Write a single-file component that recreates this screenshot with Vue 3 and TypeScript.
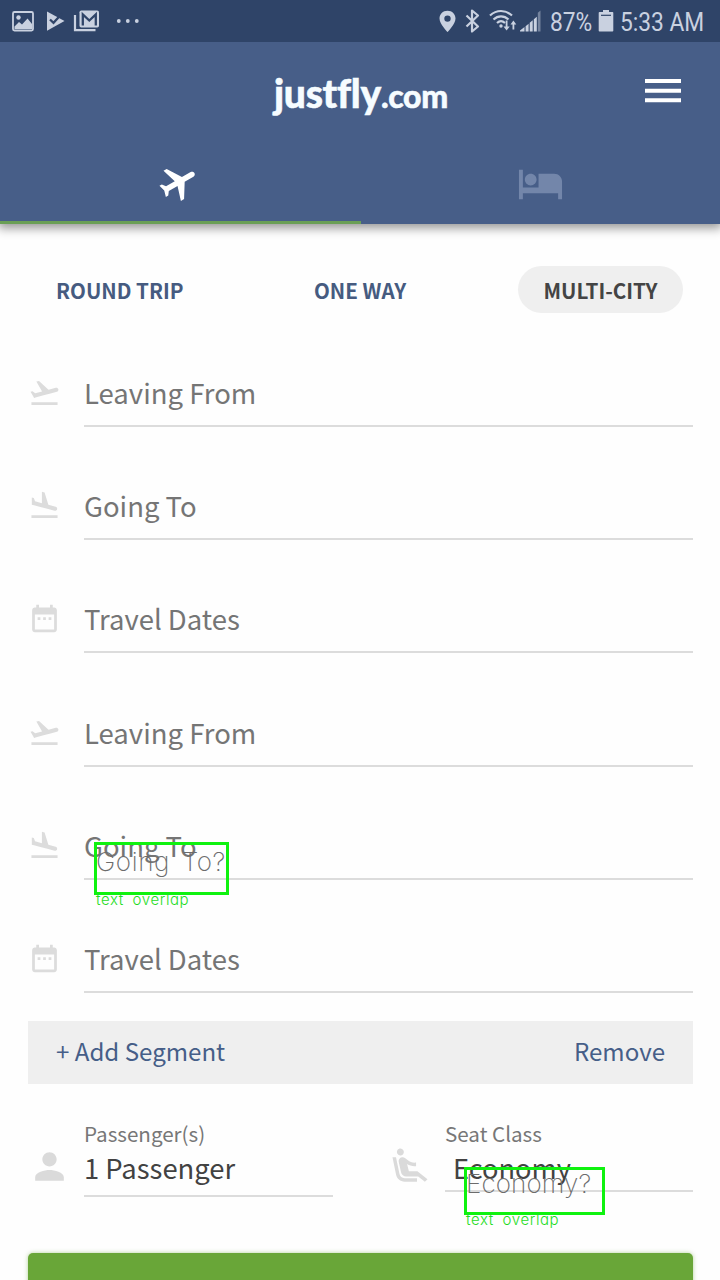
<script setup lang="ts">
type IconName = 'takeoff' | 'land' | 'date'

interface Field {
  label: string
  icon: IconName
  note?: string
}

const icons: Record<IconName, string> = {
  takeoff:
    'M2.5 19h19v2h-19zm19.57-9.36c-.21-.8-1.04-1.28-1.84-1.06L14.92 10l-6.9-6.43-1.93.51 4.14 7.17-4.97 1.33-1.97-1.54-1.45.39 1.82 3.16.77 1.33 1.6-.43 5.31-1.42 4.35-1.16L21 11.49c.81-.23 1.28-1.05 1.07-1.85z',
  land:
    'M2.5 19h19v2h-19zm7.18-5.73l4.35 1.16 5.31 1.42c.8.21 1.62-.26 1.84-1.06.21-.8-.26-1.62-1.06-1.84l-5.31-1.42-2.76-9.02L10.12 2v8.28L5.15 8.95l-.93-2.32-1.45-.39v5.17l1.6.43 5.31 1.43z',
  date:
    'M9 11H7v2h2v-2zm4 0h-2v2h2v-2zm4 0h-2v2h2v-2zm2-7h-1V2h-2v2H8V2H6v2H5c-1.11 0-1.99.9-1.99 2L3 20c0 1.1.89 2 2 2h14c1.1 0 2-.9 2-2V6c0-1.1-.9-2-2-2zm0 16H5V9h14v11z',
}

const fields: Field[] = [
  { label: 'Leaving From', icon: 'takeoff' },
  { label: 'Going To', icon: 'land' },
  { label: 'Travel Dates', icon: 'date' },
  { label: 'Leaving From', icon: 'takeoff' },
  { label: 'Going To', icon: 'land', note: 'Going To?' },
  { label: 'Travel Dates', icon: 'date' },
]
</script>

<template>
  <div class="screen">
    <div class="status">
      <svg class="status-left" viewBox="0 0 150 42" width="150" height="42">
        <rect x="13" y="12" width="20" height="18.5" rx="1.5" fill="none" stroke="#c9d1e0" stroke-width="1.8" />
        <circle cx="18.5" cy="17.5" r="2.2" />
        <path d="M14.5 28v-2.500l4.500-4.500 3 2.500 5.500-6 4.500 5.500v5z" transform="translate(0 1)" />
        <path d="M47 11.500l17.500 9.500-17.500 9.800z" />
        <path d="M50 19.500l3.500 3.300 8.500-9.300" fill="none" stroke="#2f4468" stroke-width="2.300" />
        <path d="M57 15.500l3.500-3.500" stroke="#2f4468" stroke-width="1" />
        <rect x="79.500" y="10.500" width="19.500" height="17" rx="1.800" />
        <path d="M82.800 25.500v-11l6.500 6 6.500-6v11" fill="none" stroke="#2f4468" stroke-width="2.300" />
        <path d="M75 15v15.200h20.500" fill="none" stroke="#c9d1e0" stroke-width="2.200" />
        <circle cx="118.800" cy="21" r="1.900" />
        <circle cx="127.800" cy="21" r="1.900" />
        <circle cx="136.800" cy="21" r="1.900" />
      </svg>
      <div class="status-right">
        <svg viewBox="0 0 110 42" width="110" height="42">
          <path fill-rule="evenodd" d="M9.500 10.800c-4.700 0-8 3.400-8 7.700 0 5.500 8 13.500 8 13.500s8-8 8-13.500c0-4.300-3.300-7.700-8-7.700zm0 4.600a3.200 3.200 0 1 1 0 6.400 3.200 3.200 0 0 1 0-6.400z" />
          <path d="M28 15.500l11.500 11-6 5v-21l6 5-11.500 11" fill="none" stroke="#c9d1e0" stroke-width="2.200" stroke-linejoin="round" transform="translate(.5 0)" />
          <g fill="none" stroke="#c9d1e0" stroke-width="2.200">
            <path d="M52 15.500c6.500-6 15.500-6 22 0" />
            <path d="M55.500 19.500c4.500-4.200 10.500-4.200 15 0" />
            <path d="M59 23c2.500-2.300 5.500-2.300 8 0" />
          </g>
          <circle cx="63" cy="26" r="1.700" />
          <path d="M67.200 20.500h1.800v6h2.200l-3.100 4-3.100-4h2.200zM74 29.500h1.800v-5h2l-2.900-4-2.900 4h2z" transform="translate(.5 0)" />
          <path d="M82 31.500v-1l4.500-3.400v4.400zM87.600 31.500v-5.300l3-2.500v7.800zM91.700 31.500v-8.700l3-2.500v11.200zM95.800 31.500V19.200l3-2.500v14.800z" />
          <path d="M99.800 31.500V12.800l2.700-2.300v21z" opacity=".45" />
        </svg>
        <span class="percent">87%</span>
        <svg class="battery" viewBox="0 0 16 24" width="16" height="24">
          <path d="M5 1h6v2h3.500c.5 0 .8.400.8.800v18c0 .5-.4.800-.8.800h-13c-.5 0-.8-.4-.8-.8v-18c0-.5.4-.8.8-.8H5z" />
          <path d="M3 6.300h10" stroke="#2f4468" stroke-width="1.200" />
        </svg>
        <span class="time">5:33 AM</span>
      </div>
    </div>

    <header class="header">
      <div class="brand-row">
        <div class="logo">justfly<span class="logo-small">.com</span></div>
        <svg class="menu" viewBox="0 0 36 24" width="36" height="24">
          <path d="M0 0h36v4H0zM0 9.800h36v4H0zM0 19.200h36v4H0z" fill="#fff" />
        </svg>
      </div>
      <nav class="modes">
        <div class="mode active">
          <svg class="plane" viewBox="0 0 24 24" width="44" height="44">
            <path d="M21 16v-2l-8-5V3.500c0-.83-.67-1.500-1.500-1.500S10 2.670 10 3.500V9l-8 5v2l8-2.500V19l-2 1.500V22l3.500-1 3.500 1v-1.500L13 19v-5.500l8 2.500z" />
          </svg>
        </div>
        <div class="mode">
          <svg class="bed" viewBox="0 0 24 24" width="47" height="47">
            <path d="M7 13c1.660 0 3-1.340 3-3S8.660 7 7 7s-3 1.340-3 3 1.340 3 3 3zm12-6h-8v7H3V5H1v15h2v-3h18v3h2v-9c0-2.210-1.790-4-4-4z" />
          </svg>
        </div>
      </nav>
    </header>

    <main class="content">
      <div class="trips">
        <button class="trip">ROUND TRIP</button>
        <button class="trip">ONE WAY</button>
        <button class="trip selected">MULTI-CITY</button>
      </div>

      <div class="fields">
        <div v-for="(field, i) in fields" :key="i" class="field">
          <svg class="field-icon" viewBox="0 0 24 24" width="33" height="33"><path :d="icons[field.icon]" /></svg>
          <div class="field-box">{{ field.label }}</div>
          <div v-if="field.note" class="note note-going">
            <span class="note-text">{{ field.note }}</span>
            <span class="note-caption">text overlap</span>
          </div>
        </div>
      </div>

      <div class="segment">
        <span>+ Add Segment</span>
        <span class="remove">Remove</span>
      </div>

      <div class="options">
        <svg class="option-icon" viewBox="0 0 24 24" width="43" height="43">
          <path d="M12 12c2.210 0 4-1.790 4-4s-1.790-4-4-4-4 1.790-4 4 1.790 4 4 4zm0 2c-2.670 0-8 1.340-8 4v2h16v-2c0-2.660-5.330-4-8-4z" />
        </svg>
        <div class="option passengers">
          <div class="option-label">Passenger(s)</div>
          <div class="option-value">1 Passenger</div>
        </div>
        <svg class="option-icon seat" viewBox="0 0 24 24" width="42" height="42">
          <path d="M5.350 5.640c-.9-.64-1.120-1.880-.49-2.790.63-.9 1.880-1.120 2.790-.49.9.64 1.120 1.880.49 2.790-.64.9-1.880 1.120-2.790.49zM16 19H8.930c-1.480 0-2.740-1.080-2.960-2.540L4 7H2l1.990 9.760C4.370 19.200 6.470 21 8.940 21H16v-2zm.23-4h-4.880l-1.030-4.100c1.580.89 3.280 1.540 5.150 1.220V9.990c-1.630.31-3.440-.27-4.690-1.250L9.140 7.470c-.23-.18-.49-.3-.76-.38-.32-.09-.66-.12-.99-.06h-.02c-1.230.22-2.050 1.390-1.840 2.610l1.350 5.920C7.160 16.980 8.390 18 9.830 18h6.850l3.820 3 1.500-1.500-5.770-4.500z" />
        </svg>
        <div class="option class">
          <div class="option-label">Seat Class</div>
          <div class="option-value">Economy</div>
          <div class="note note-economy">
            <span class="note-text">Economy?</span>
            <span class="note-caption">text overlap</span>
          </div>
        </div>
      </div>

      <div class="submit"></div>
    </main>
  </div>
</template>

<style>
body {
  margin: 0;
  background: #fff;
}
</style>

<style scoped>
* {
  box-sizing: border-box;
}
.screen {
  width: 720px;
  height: 1280px;
  overflow: hidden;
  background: #fefefe;
  font-family: "Noto Sans CJK SC", "Noto Sans", sans-serif;
  white-space: nowrap;
}
svg {
  display: block;
  flex: none;
}
.status {
  position: relative;
  z-index: 1;
  display: flex;
  justify-content: space-between;
  height: 42px;
  background: #2f4468;
  color: #c9d1e0;
  fill: #c9d1e0;
  font: 25px/42px Roboto, sans-serif;
}
.status-right {
  display: flex;
  width: 282px;
}
.percent,
.time {
  display: block;
  transform: scaleX(0.91);
  transform-origin: 0 50%;
  padding-top: 2px;
}
.percent {
  width: 50px;
  margin-left: 2px;
}
.battery {
  margin: 9px 0 0 -2px;
}
.time {
  margin-left: 6px;
}
.header {
  display: flex;
  flex-direction: column;
  height: 182px;
  background: #475e88;
  box-shadow: 0 2px 10px 2px rgba(0, 0, 0, 0.42);
}
.brand-row {
  display: flex;
  justify-content: space-between;
  height: 98px;
  padding: 0 39px 0 274px;
}
.logo {
  color: #f6fcff;
  font: 900 39px/46px Lato, sans-serif;
  font-variant-ligatures: none;
  letter-spacing: -0.3px;
  padding-top: 28px;
  -webkit-text-stroke: 0.5px #f6fcff;
}
.logo-small {
  font-size: 32px;
}
.menu {
  margin-top: 37px;
}
.modes {
  display: flex;
  flex: 1;
}
.mode {
  flex: none;
  width: 361px;
  padding: 21px 0 0 157px;
}
.active {
  border-bottom: 3px solid #6a9f56;
}
.plane {
  fill: #fff;
  transform: rotate(60deg);
}
.bed {
  fill: #7386aa;
  margin: -1px 0 0 -1px;
}
.content {
  padding: 42px 27px 0 28px;
}
.trips {
  display: flex;
  padding-right: 10px;
}
.trip {
  height: 47px;
  padding: 0 0 0 28px;
  border: 0;
  border-radius: 24px;
  background: none;
  color: #465b80;
  font: bold 20.6px/48px "Noto Sans CJK SC", sans-serif;
  text-align: left;
  width: 258px;
}
.trip + .trip {
  width: 232px;
}
.trip.selected {
  width: 165px;
  padding: 0;
  text-align: center;
  background: #efefef;
  color: #444;
}
.fields {
  height: 680px;
  padding-top: 0.8px;
  display: grid;
  grid-template-rows: repeat(6, 113.2px);
}
.field {
  position: relative;
  display: flex;
  align-items: flex-end;
}
.field-icon {
  fill: #dcdcdc;
  margin-bottom: 18px;
}
.field-box {
  flex: 1;
  height: 68px;
  margin-left: 23px;
  border-bottom: 2px solid #dcdcdc;
  color: #757575;
  font-size: 27.5px;
  line-height: 66px;
}
.segment {
  display: flex;
  justify-content: space-between;
  height: 63px;
  margin-top: 28px;
  padding: 0 28px;
  background: #efefef;
  color: #465e88;
  font-size: 24.1px;
  line-height: 59px;
}
.options {
  display: flex;
  height: 169px;
  padding-top: 33px;
}
.option-icon {
  fill: #dadada;
  margin-top: 28px;
}
.option {
  position: relative;
  border-bottom: 2px solid #dcdcdc;
}
.passengers {
  width: 249px;
  height: 80px;
  margin-left: 13px;
}
.seat {
  margin-left: 56px;
}
.class {
  width: 248px;
  height: 75px;
  margin-left: 14px;
}
.option-label {
  color: #777;
  font-size: 20.6px;
  line-height: 32px;
}
.option-value {
  color: #424242;
  font-size: 27.4px;
  line-height: 36px;
}
.class .option-value {
  padding-left: 8px;
  font-size: 27.2px;
}
.note {
  position: absolute;
  border: 3px solid #0ff20f;
  font-family: Inter, sans-serif;
  font-weight: 200;
  font-feature-settings: "cv11";
}
.note-text {
  display: block;
  margin-left: -1px;
  color: #6c6c6c;
  font-size: 26px;
  line-height: 33px;
  letter-spacing: 0.6px;
  word-spacing: 4px;
}
.note-caption {
  position: absolute;
  left: -1px;
  top: 46px;
  color: #1fdc1f;
  font-size: 15px;
  font-weight: 300;
  line-height: 18px;
  letter-spacing: 0.6px;
  word-spacing: 4px;
}
.note-going {
  left: 66px;
  top: 75px;
  width: 135px;
  height: 53px;
}
.note-economy {
  left: 19px;
  top: 50px;
  width: 141px;
  height: 48px;
}
.note-economy .note-text {
  line-height: 27px;
  letter-spacing: 0.1px;
}
.note-economy .note-caption {
  top: 41px;
}
.submit {
  height: 60px;
  border-radius: 5px;
  background: #69a638;
  box-shadow: 0 0 4px rgba(105, 166, 56, 0.5);
}
</style>
